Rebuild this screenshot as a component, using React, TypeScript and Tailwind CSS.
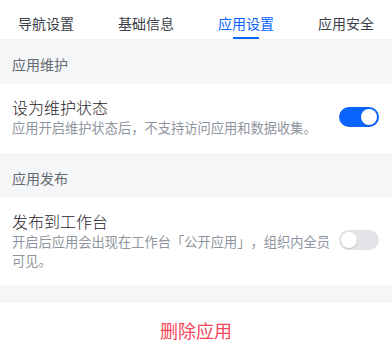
import { useState } from 'react';

const tabs = ['导航设置', '基础信息', '应用设置', '应用安全'];

function Toggle({ on, onChange }: { on: boolean; onChange: () => void }) {
  return (
    <button
      onClick={onChange}
      className={`relative shrink-0 h-5 w-10 rounded-full transition-colors ${on ? 'bg-[#0a64ff]' : 'bg-[#e3e4e8]'}`}
    >
      <span
        className={`absolute top-[2px] h-4 w-4 rounded-full bg-white shadow-[0_1px_2px_rgba(0,0,0,0.15)] transition-all ${on ? 'left-[22px]' : 'left-[2px]'}`}
      />
    </button>
  );
}

export default function App() {
  const [active, setActive] = useState(2);
  const [maintenance, setMaintenance] = useState(true);
  const [publish, setPublish] = useState(false);

  return (
    <div
      className="min-h-screen bg-[#f5f6f7] text-[#1f2329] [text-spacing-trim:space-all]"
      style={{ fontFamily: '"Noto Sans CJK SC", "Noto Sans", sans-serif' }}
    >
      <nav className="flex h-10 justify-center overflow-hidden border-b border-[#eef0f2] bg-white">
        {tabs.map((tab, i) => (
          <button
            key={tab}
            onClick={() => setActive(i)}
            className={`relative h-full w-[100px] shrink-0 pt-[6px] text-center text-[14px] leading-5 ${i === active ? 'text-[#0a64ff]' : 'text-[#3b4048]'}`}
          >
            {tab}
            {i === active && (
              <span className="absolute bottom-0 left-1/2 h-[2px] w-[26px] -translate-x-1/2 bg-[#0a64ff]" />
            )}
          </button>
        ))}
      </nav>

      <div className="px-3 pt-[14px] pb-[10px] text-[14px] leading-5 text-[#646a73]">应用维护</div>
      <div className="flex items-center gap-[7px] bg-white pl-3 pr-[13px] pt-3 pb-4">
        <div className="min-w-0 flex-1">
          <div className="text-[16px] font-light leading-[22px]">设为维护状态</div>
          <div className="text-[13.25px] leading-[19px] text-[#8f959e]">应用开启维护状态后，不支持访问应用和数据收集。</div>
        </div>
        <Toggle on={maintenance} onChange={() => setMaintenance(!maintenance)} />
      </div>

      <div className="px-3 pt-[15px] pb-[10px] text-[14px] leading-5 text-[#646a73]">应用发布</div>
      <div className="flex items-center gap-[7px] bg-white pl-3 pr-[13px] pt-3 pb-[15px]">
        <div className="min-w-0 flex-1">
          <div className="text-[16px] font-light leading-[22px]">发布到工作台</div>
          <div className="text-[13.25px] leading-[19px] text-[#8f959e]">
            开启后应用会出现在工作台「公开应用」，组织内全员可见。
          </div>
        </div>
        <Toggle on={publish} onChange={() => setPublish(!publish)} />
      </div>

      <div className="mt-[18px] bg-white">
        <button className="flex h-[54px] w-full items-center justify-center text-[18px] text-[#f5465a]">
          删除应用
        </button>
      </div>
    </div>
  );
}
